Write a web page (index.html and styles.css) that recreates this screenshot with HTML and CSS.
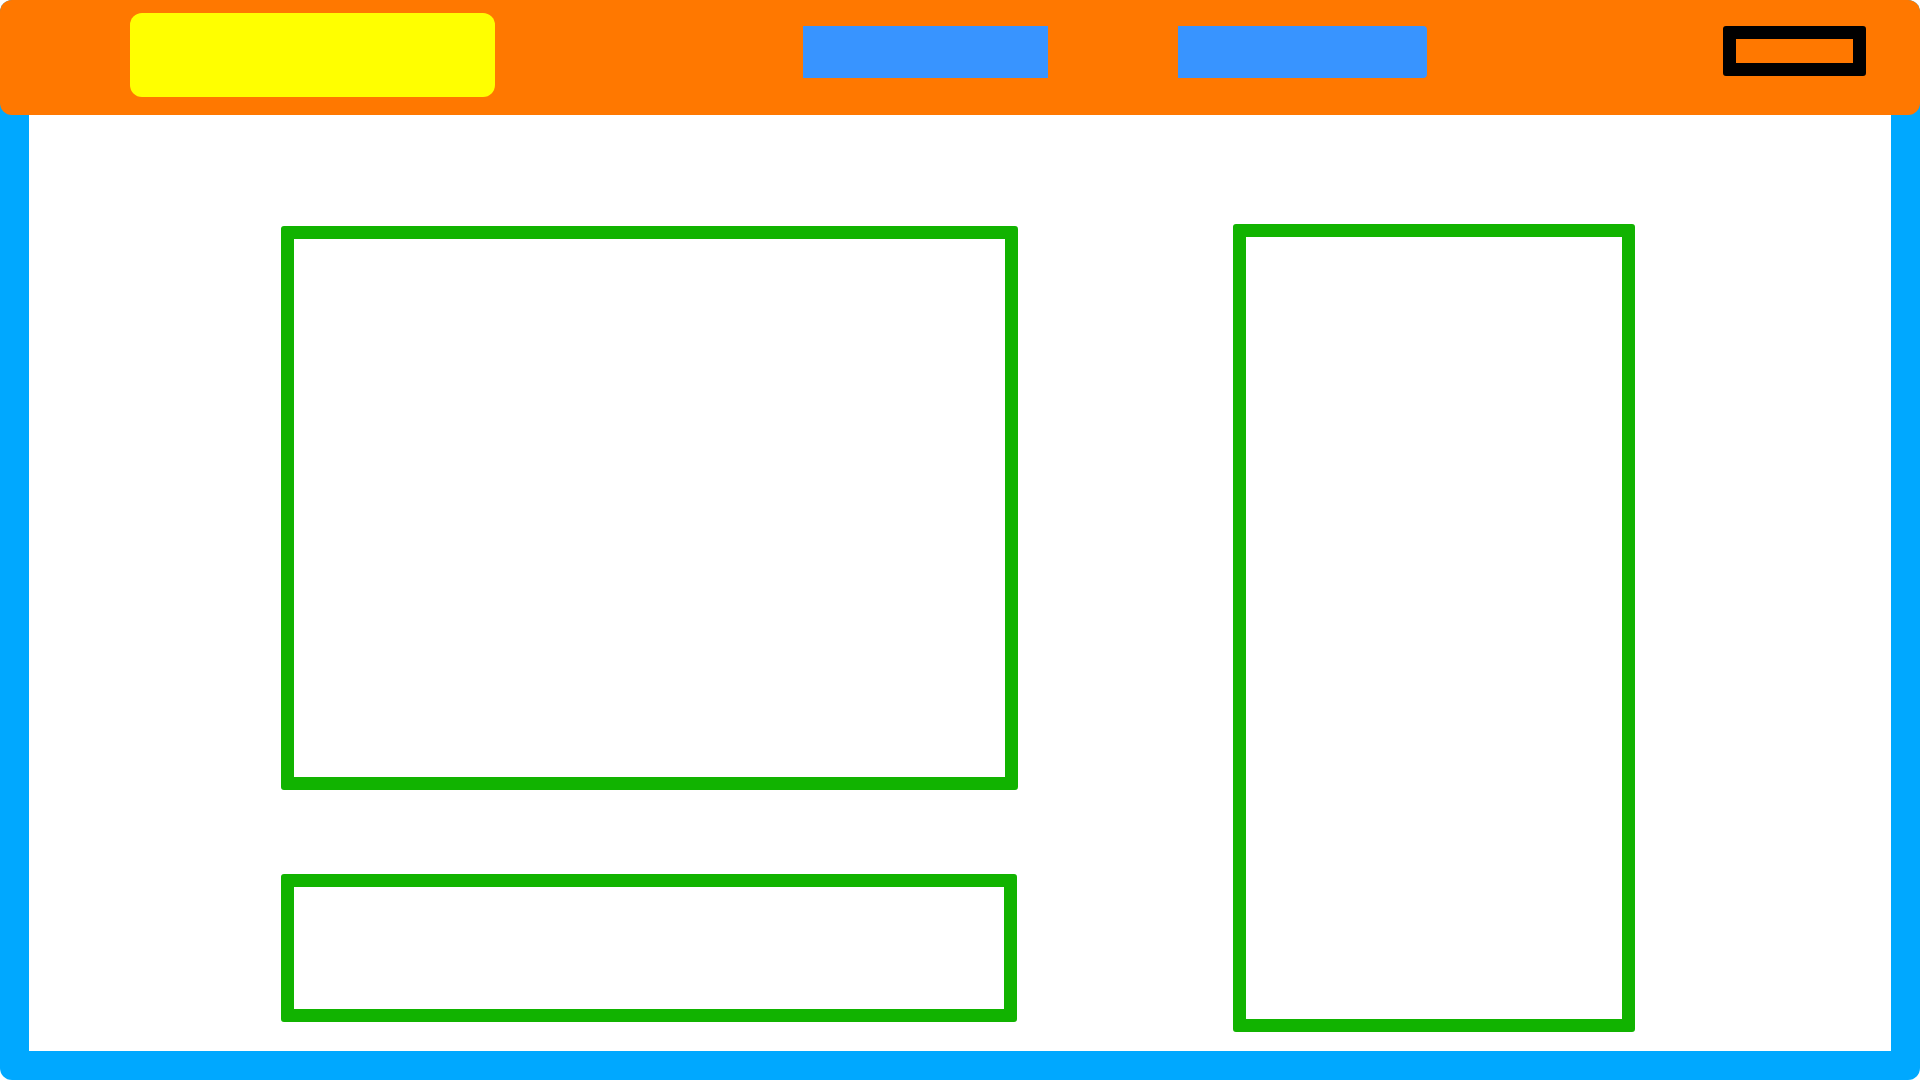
FILE: index.html
```html
<!DOCTYPE html>
<html lang="en">
<head>
    <meta charset="UTF-8">
    <meta name="viewport" content="width=device-width, initial-scale=1.0">
    <title>Layout</title>
    <link rel="stylesheet" href="styles.css">
</head>
<body>
    <div class="page">
        <!-- Barra superior -->
        <header class="cabecera">
            <div class="logo"></div>
            <div class="enlace"></div>
            <div class="enlace enlace-redondo"></div>
            <div class="boton"></div>
        </header>

        <!-- Contenido -->
        <main class="contenido">
            <div class="columna">
                <div class="caja caja-grande"></div>
                <div class="caja caja-baja"></div>
            </div>
            <div class="caja caja-lateral"></div>
        </main>
    </div>
</body>
</html>
```

FILE: styles.css
```css
/* Estilos básicos */
html, body {
    margin: 0;
    padding: 0;
    background-color: #fff;
}

.page {
    box-sizing: border-box;
    width: 1920px;
    height: 1080px;
    display: flex;
    flex-direction: column;
    background-color: #00a8ff; /* Marco azul */
    padding: 0 29px 29px;
    border-radius: 12px;
}

/* Barra superior */
.cabecera {
    flex: 0 0 115px;
    margin: 0 -29px;
    display: flex;
    align-items: flex-start;
    padding-left: 130px;
    background-color: #ff7800;
    border-radius: 12px;
}

.cabecera > div {
    flex-shrink: 0;
}

.logo {
    width: 365px;
    height: 84px;
    margin-top: 13px;
    background-color: #ffff00;
    border-radius: 12px;
}

.enlace {
    width: 245px;
    height: 52px;
    margin-top: 26px;
    margin-left: 308px;
    background-color: #3894ff;
}

.enlace-redondo {
    width: 249px;
    margin-left: 130px;
    border-radius: 0 4px 4px 0;
}

.boton {
    box-sizing: border-box;
    width: 143px;
    height: 50px;
    margin-top: 26px;
    margin-left: 296px;
    border: 13px solid #000;
    border-radius: 3px;
}

/* Zona blanca */
.contenido {
    flex: 1;
    display: flex;
    align-items: flex-start;
    gap: 215px;
    padding: 109px 0 0 252px;
    background-color: #fff;
}

.columna {
    display: flex;
    flex-direction: column;
    gap: 84px;
    margin-top: 2px;
}

.caja {
    box-sizing: border-box;
    border: 13px solid #11b300;
    border-radius: 3px;
}

.caja-grande {
    width: 737px;
    height: 564px;
}

.caja-baja {
    width: 736px;
    height: 148px;
}

.caja-lateral {
    width: 402px;
    height: 808px;
}
```
